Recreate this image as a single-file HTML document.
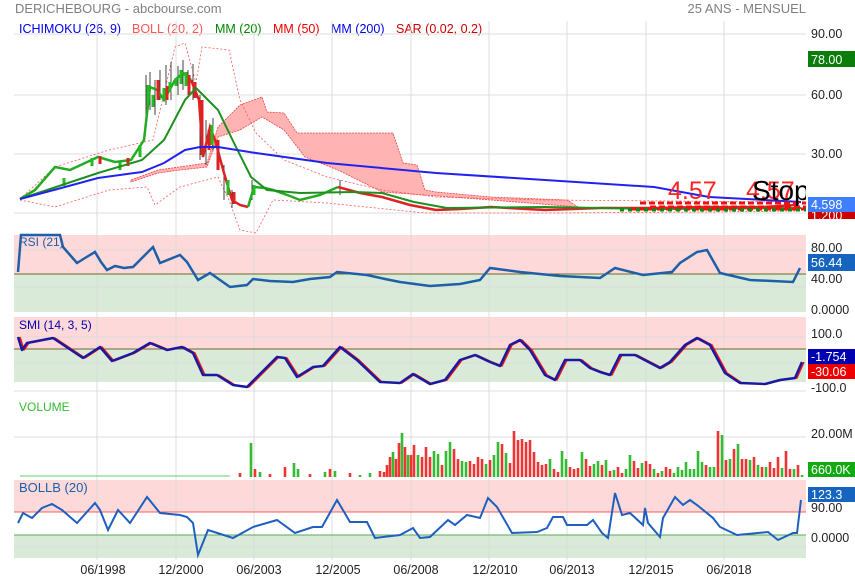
<!DOCTYPE html>
<html><head><meta charset="utf-8"><style>
body{margin:0;background:#fff;width:855px;height:580px;overflow:hidden}
svg{display:block}
text{font-family:"Liberation Sans",Arial,sans-serif}
</style></head><body>
<svg width="855" height="580" viewBox="0 0 855 580" xmlns="http://www.w3.org/2000/svg">
<text x="15" y="13" font-size="13" fill="#808080">DERICHEBOURG - abcbourse.com</text>
<text x="806" y="13" font-size="13" fill="#808080" text-anchor="end">25 ANS - MENSUEL</text>
<g font-size="12.5">
<text x="19" y="33" fill="#0000ee">ICHIMOKU (26, 9)</text>
<text x="132" y="33" fill="#ff5555">BOLL (20, 2)</text>
<text x="215" y="33" fill="#008800">MM (20)</text>
<text x="273" y="33" fill="#ee0000">MM (50)</text>
<text x="331" y="33" fill="#0000ee">MM (200)</text>
<text x="396" y="33" fill="#cc0000">SAR (0.02, 0.2)</text>
</g>

<rect x="14" y="235" width="792" height="39" fill="#fdd9d9"/>
<rect x="14" y="274" width="792" height="38" fill="#d9ead9"/>
<rect x="14" y="317" width="792" height="32" fill="#fdd9d9"/>
<rect x="14" y="349" width="792" height="33" fill="#d9ead9"/>
<rect x="14" y="480" width="792" height="32" fill="#fdd9d9"/>
<rect x="14" y="535" width="792" height="23" fill="#d9ead9"/>

<g stroke="#dcdcdc" stroke-width="1">
<path d="M14 34H806M14 95H806M14 154H806M14 213H806"/>
<path d="M14 250H806M14 287H806M14 337H806M14 363H806M14 391H806M14 437H806M14 547H806"/>
<path d="M97 21V560M176 21V560M254 21V560M332 21V560M411 21V560M489 21V560M567 21V560M646 21V560M724 21V560"/>
</g>
<path d="M14 274H806M14 349H806" stroke="#6b6b2a" stroke-width="1"/>
<path d="M14 512H806" stroke="#ff5a5a" stroke-width="1"/>
<path d="M14 535H806" stroke="#5aa85a" stroke-width="1"/>

<path d="M131 180L158 170L207 163L218 127L240 105L262 97L267 112L284 113L297 133L393 133L403 163L417 165L425 190L436 192L491 197L567 200L578 207L491 200L425 195L382 192L338 170L305 157L284 130L262 117L240 130L218 137L207 167L180 170L158 173L131 182Z" fill="#ffb3b3" stroke="#ee4444" stroke-width="0.8" stroke-dasharray="2,1"/>
<g fill="none" stroke="#ff5555" stroke-width="0.8" stroke-dasharray="2,2">
<polyline points="20,199 55,167 109,150 153,140 175,47 185,43 196,83 202,47 229,50 240,100 256,133 284,160 327,177 382,190 436,197 545,200 801,202"/>
<polyline points="20,200 55,207 109,190 147,187 155,205 180,187 218,177 229,200 240,230 256,233 273,200 327,203 425,213 545,213 709,212 801,211"/>
</g>
<g stroke="#444" stroke-width="1">
<path d="M146 75V125M150 72V110M155 80V115M160 70V100M166 65V105M171 62V100M178 66V95M183 60V90M188 70V95M193 64V100M200 95V160M206 120V165M213 118V150M224 165V200M232 190V208M252 180V200M340 180V195"/>
</g>
<g stroke-width="2.5" fill="none">
<polyline stroke="#22aa22" points="20,199 35,190 55,167 70,170 98,157 115,162 131,160 144,140 150,87 157,90 164,100 175,80 183,73 191,80"/>
<polyline stroke="#dd2222" points="191,80 199,100 203,157 210,127 215,140 224,173 232,200 240,205 248,207"/>
<polyline stroke="#22aa22" points="248,207 254,187 265,188 273,190 290,196 300,200 320,195 338,187"/>
<polyline stroke="#dd2222" points="338,187 360,193 382,197 410,205 436,210 460,209 491,207 545,210 600,208 654,208 700,207 763,207 796,205"/>
</g>
<g stroke-width="3">
<path stroke="#22bb22" d="M148 85v20M153 95v12M164 88v12M170 82v10M176 78v8M181 70v14M186 72v14M212 125v20M228 180v15M254 185v10M64 178v8M92 158v8M120 162v8M140 145v12"/>
<path stroke="#dd2222" d="M158 80v20M167 86v14M189 75v20M195 82v16M202 100v55M209 130v20M218 140v30M234 192v12M100 156v8M128 158v8"/>
</g>
<polyline fill="none" stroke="#1f8f1f" stroke-width="2" points="20,199 98,173 142,160 164,140 185,100 196,88 218,110 234,143 251,177 267,190 300,193 354,192 382,193 414,202 447,208 545,207 654,209 801,208"/>
<polyline fill="none" stroke="#2222ee" stroke-width="2" points="20,199 65,187 98,178 142,172 164,163 185,150 200,147 218,147 256,153 327,163 436,173 545,180 654,187 709,197 801,202"/>
<g>
<path d="M640 203H806M650 207H806M630 209H806" stroke="#ee1111" stroke-width="3" stroke-dasharray="6,3"/>
<path d="M620 210H806" stroke="#118811" stroke-width="3" stroke-dasharray="4,4"/>
<text x="668" y="199" font-size="25" fill="#ff2222">4.57</text>
<text x="746" y="199" font-size="25" fill="#ff2222">4.57</text>
<text x="752" y="200" font-size="28" fill="#000">Stop</text>
</g>
<rect x="806" y="180" width="49" height="40" fill="#fff"/>

<polyline fill="none" stroke="#1e5fa8" stroke-width="2.5" points="18,272 21,235 60,235 63,247 70,255 77,263 85,258 95,252 101,262 107,270 115,266 124,268 133,267 145,255 153,247 160,263 180,255 187,262 198,280 210,273 220,280 230,287 247,285 253,279 270,281 293,282 310,279 330,277 337,272 367,275 385,279 400,282 430,286 460,284 480,280 490,268 520,272 560,276 600,278 615,268 643,275 672,272 680,263 697,252 707,250 720,273 750,280 793,282 800,268"/>
<text x="19" y="246" font-size="12" fill="#1e5fa8">RSI (21)</text>

<g fill="none" stroke-linejoin="round">
<polyline stroke="#ee1111" stroke-width="1.5" transform="translate(2,0)" points="18,337 22,350 27,343 53,338 83,358 100,347 112,361 133,353 150,343 167,350 182,347 193,353 203,375 217,375 233,385 247,387 277,357 285,358 297,377 313,367 323,366 340,347 357,360 380,382 400,383 413,374 430,384 445,380 460,360 475,355 490,362 500,366 510,345 520,340 530,350 545,375 555,380 565,360 580,360 590,368 600,372 610,375 620,355 635,355 660,368 670,362 685,345 697,338 710,345 725,373 740,383 765,384 780,380 795,378 802,362"/>
<polyline stroke="#1a1aa0" stroke-width="2.5" points="18,337 22,350 27,343 53,338 83,358 100,347 112,361 133,353 150,343 167,350 182,347 193,353 203,375 217,375 233,385 247,387 277,357 285,358 297,377 313,367 323,366 340,347 357,360 380,382 400,383 413,374 430,384 445,380 460,360 475,355 490,362 500,366 510,345 520,340 530,350 545,375 555,380 565,360 580,360 590,368 600,372 610,375 620,355 635,355 660,368 670,362 685,345 697,338 710,345 725,373 740,383 765,384 780,380 795,378 802,362"/>
</g>
<text x="19" y="329" font-size="12" fill="#0000aa">SMI (14, 3, 5)</text>

<text x="19" y="411" font-size="12" fill="#33bb33">VOLUME</text>
<path d="M20 476H230" stroke="#6c6" stroke-width="1"/>
<g stroke-width="2.6">
<path stroke="#ee3333" d="M255 477v-8M285 477v-10M330 477v-8M380 477v-6M384 477v-5M387 477v-12M390 477v-20M396 477v-18M399 477v-34M405 477v-30M411 477v-22M414 477v-32M422 477v-20M426 477v-30M430 477v-20M442 477v-12M454 477v-28M458 477v-18M470 477v-16M474 477v-13M478 477v-20M482 477v-18M490 477v-17M502 477v-33M510 477v-14M514 477v-46M518 477v-37M522 477v-38M526 477v-35M530 477v-37M534 477v-25M538 477v-15M542 477v-12M546 477v-13M554 477v-8M558 477v-5M570 477v-10M574 477v-8M578 477v-9M586 477v-18M590 477v-11M602 477v-12M610 477v-6M618 477v-10M622 477v-4M634 477v-16M638 477v-9M646 477v-16M650 477v-13M658 477v-4M666 477v-10M670 477v-8M706 477v-12M718 477v-46M726 477v-17M734 477v-28M742 477v-18M746 477v-18M754 477v-20M762 477v-10M770 477v-15M774 477v-9M778 477v-20M786 477v-26M790 477v-8M798 477v-12M240 477v-4M270 477v-3M310 477v-3M350 477v-4"/>
<path stroke="#33bb33" d="M251 477v-34M294 477v-14M298 477v-8M335 477v-6M393 477v-25M402 477v-44M408 477v-22M418 477v-22M434 477v-26M438 477v-23M446 477v-26M450 477v-35M462 477v-16M466 477v-15M486 477v-13M494 477v-22M498 477v-35M506 477v-24M550 477v-18M562 477v-26M566 477v-18M582 477v-25M594 477v-13M598 477v-16M606 477v-17M614 477v-7M626 477v-8M630 477v-22M642 477v-14M654 477v-8M662 477v-6M674 477v-4M678 477v-10M682 477v-7M686 477v-15M690 477v-8M694 477v-8M698 477v-26M702 477v-15M710 477v-10M714 477v-10M722 477v-42M730 477v-18M738 477v-33M750 477v-17M758 477v-12M766 477v-10M782 477v-9M794 477v-8M802 477v-2M260 477v-5M325 477v-5M360 477v-2M370 477v-4"/>
</g>

<polyline fill="none" stroke="#1e5fbf" stroke-width="2" points="18,523 23,513 32,518 42,508 52,504 62,510 77,523 95,503 100,510 108,530 118,510 130,523 147,497 160,513 180,515 187,517 193,523 198,555 208,530 233,538 253,527 277,520 295,533 313,527 322,527 337,500 350,522 367,522 375,538 400,535 413,528 420,538 430,537 448,520 455,525 467,515 480,518 488,498 497,507 512,533 537,532 547,528 553,517 563,517 567,525 587,525 593,520 602,533 608,538 615,493 622,515 630,513 643,525 645,508 648,523 660,537 663,518 675,497 683,505 690,500 697,505 713,518 720,527 737,535 768,532 778,540 793,533 797,533 801,500"/>
<text x="19" y="492" font-size="13" fill="#1e5fa8">BOLLB (20)</text>

<g font-size="12.5" fill="#222">
<text x="811" y="38">90.00</text>
<text x="811" y="99">60.00</text>
<text x="811" y="158">30.00</text>
<text x="811" y="252">80.00</text>
<text x="811" y="283">40.00</text>
<text x="811" y="314">0.0000</text>
<text x="811" y="338">100.0</text>
<text x="811" y="392">-100.0</text>
<text x="811" y="438">20.00M</text>
<text x="811" y="512">90.00</text>
<text x="811" y="542">0.0000</text>
</g>
<g font-size="12.5" fill="#fff">
<rect x="808" y="51" width="47" height="16" fill="#0a7d0a"/><text x="811" y="64">78.00</text>
<rect x="808" y="210" width="47" height="9" fill="#cc0000"/><text x="811" y="220" fill="#fff">1.200</text>
<rect x="808" y="197" width="47" height="15" fill="#3f7fff"/><text x="811" y="209">4.598</text>
<rect x="808" y="254" width="47" height="17" fill="#1565c0"/><text x="811" y="267">56.44</text>
<rect x="808" y="349" width="47" height="15" fill="#0000b0"/><text x="811" y="361">-1.754</text>
<rect x="808" y="364" width="47" height="15" fill="#ee0000"/><text x="811" y="376">-30.06</text>
<rect x="808" y="462" width="47" height="15" fill="#11aa11"/><text x="811" y="474">660.0K</text>
<rect x="808" y="487" width="47" height="15" fill="#1565c0"/><text x="811" y="499">123.3</text>
</g>

<g font-size="12.5" fill="#222" text-anchor="middle">
<text x="103" y="574">06/1998</text>
<text x="181" y="574">12/2000</text>
<text x="259" y="574">06/2003</text>
<text x="338" y="574">12/2005</text>
<text x="416" y="574">06/2008</text>
<text x="495" y="574">12/2010</text>
<text x="572" y="574">06/2013</text>
<text x="651" y="574">12/2015</text>
<text x="729" y="574">06/2018</text>
</g>
</svg>
</body></html>
